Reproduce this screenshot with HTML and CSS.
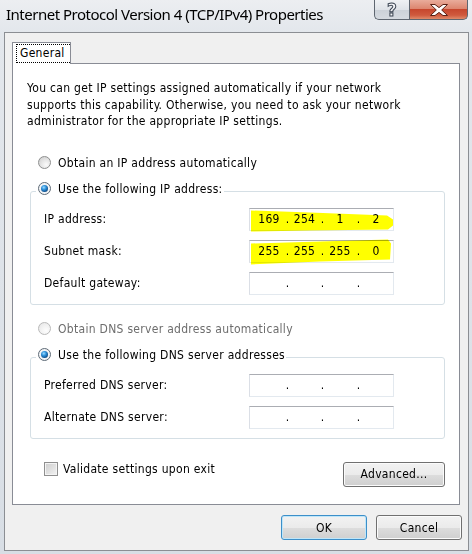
FILE: index.html
```html
<!DOCTYPE html>
<html>
<head>
<meta charset="utf-8">
<title>Internet Protocol Version 4 (TCP/IPv4) Properties</title>
<link rel="stylesheet" href="styles.css">
</head>
<body>
<div class="window">
  <div class="titlebar">
    <div class="title">Internet Protocol Version 4 (TCP/IPv4) Properties</div>
    <div class="caption">
      <div class="cap-btn help"><span class="qmark">?</span></div>
      <div class="cap-btn close">
        <svg width="18" height="12" viewBox="0 0 18 12"><polygon points="0.5,0.5 5,0.5 9,3.6 13,0.5 17.5,0.5 11.7,6 17.5,11.5 13,11.5 9,8.4 5,11.5 0.5,11.5 6.3,6" fill="#fff" stroke="#5a2216" stroke-width="1" stroke-linejoin="round"/></svg>
      </div>
    </div>
  </div>
  <div class="client">
    <div class="tabs"><div class="tab"><span class="focus">General</span></div></div>
    <div class="panel">
      <p class="intro">You can get IP settings assigned automatically if your network<br>supports this capability. Otherwise, you need to ask your network<br>administrator for the appropriate IP settings.</p>

      <div class="radio-row first"><span class="radio"></span><span>Obtain an IP address automatically</span></div>
      <div class="group ip-group">
        <div class="legend"><span class="radio checked"></span><span>Use the following IP address:</span></div>
        <div class="field-row">
          <span class="label">IP address:</span>
          <div class="ipbox hl hl1"><span class="oct">169</span><span class="dot">.</span><span class="oct">254</span><span class="dot">.</span><span class="oct">1</span><span class="dot">.</span><span class="oct">2</span></div>
        </div>
        <div class="field-row">
          <span class="label">Subnet mask:</span>
          <div class="ipbox hl hl2"><span class="oct">255</span><span class="dot">.</span><span class="oct">255</span><span class="dot">.</span><span class="oct">255</span><span class="dot">.</span><span class="oct">0</span></div>
        </div>
        <div class="field-row">
          <span class="label">Default gateway:</span>
          <div class="ipbox"><span class="oct"></span><span class="dot">.</span><span class="oct"></span><span class="dot">.</span><span class="oct"></span><span class="dot">.</span><span class="oct"></span></div>
        </div>
      </div>

      <div class="radio-row dns-first disabled"><span class="radio"></span><span>Obtain DNS server address automatically</span></div>
      <div class="group dns-group">
        <div class="legend"><span class="radio checked"></span><span>Use the following DNS server addresses</span></div>
        <div class="field-row">
          <span class="label">Preferred DNS server:</span>
          <div class="ipbox"><span class="oct"></span><span class="dot">.</span><span class="oct"></span><span class="dot">.</span><span class="oct"></span><span class="dot">.</span><span class="oct"></span></div>
        </div>
        <div class="field-row">
          <span class="label">Alternate DNS server:</span>
          <div class="ipbox"><span class="oct"></span><span class="dot">.</span><span class="oct"></span><span class="dot">.</span><span class="oct"></span><span class="dot">.</span><span class="oct"></span></div>
        </div>
      </div>

      <div class="bottom-row">
        <div class="check"><span class="checkbox"></span><span>Validate settings upon exit</span></div>
        <div class="btn advanced">Advanced...</div>
      </div>
    </div>
    <div class="dialog-buttons">
      <div class="btn ok">OK</div>
      <div class="btn cancel">Cancel</div>
    </div>
  </div>
</div>
</body>
</html>
```

FILE: styles.css
```css
* { box-sizing: border-box; }
html, body { margin: 0; padding: 0; }
body {
  width: 472px;
  height: 554px;
  overflow: hidden;
  font-family: "DejaVu Sans Condensed", "DejaVu Sans", sans-serif;
  font-size: 12px;
  letter-spacing: 0.3px;
  color: #000;
  background: #dfe4ea;
}
.window {
  height: 554px;
  display: flex;
  flex-direction: column;
  background: linear-gradient(#eceef1 0px, #e3e7ec 32px, #d8dee5 554px);
}
.titlebar {
  height: 32px;
  flex-shrink: 0;
  display: flex;
  align-items: flex-start;
}
.title {
  font-family: "Noto Sans", sans-serif;
  font-size: 15px;
  letter-spacing: -0.5px;
  line-height: 20px;
  padding: 4px 0 0 6px;
  white-space: nowrap;
}
.caption {
  margin-left: auto;
  margin-right: 4px;
  display: flex;
}
.cap-btn {
  height: 20px;
  display: flex;
  align-items: center;
  justify-content: center;
  border: 1px solid #5e6670;
  border-top: none;
}
.help {
  width: 35px;
  border-right: none;
  border-radius: 0 0 0 5px;
  background: linear-gradient(#eff1f4, #dfe3e8 50%, #cbd1d8 51%, #d5dae0);
}
.qmark {
  font-family: "DejaVu Sans", sans-serif;
  font-weight: bold;
  font-size: 17px;
  line-height: 18px;
  letter-spacing: 0;
  color: #f4f5f7;
  -webkit-text-stroke: 1px #3a4452;
}
.close {
  width: 59px;
  border-radius: 0 0 5px 0;
  background: linear-gradient(#e9ac9b, #dd8670 45%, #c7472e 50%, #d05a3e 80%, #e08b6a);
}
.close svg { display: block; }

.client {
  flex: 1;
  margin: 0 3px 3px 4px;
  border: 1px solid #8b8e93;
  background: #f0f0f0;
  padding: 9px 6px 0 7px;
  display: flex;
  flex-direction: column;
}
.tabs { display: flex; height: 21px; position: relative; z-index: 1; }
.tab {
  width: 59px;
  height: 22px;
  background: #fff;
  border: 1px solid #898c95;
  border-bottom: none;
  padding: 1px 0 0 3px;
}
.focus {
  display: block;
  height: 19px;
  border: 1px dotted #000;
  border-right: none;
  padding-left: 3px;
  line-height: 17px;
}
.panel {
  height: 442px;
  margin-right: 2px;
  border: 1px solid #898c95;
  background: #fff;
  padding: 16px 14px 0 17px;
}
.intro {
  margin: 0 0 0 -3px;
  line-height: 16.5px;
  white-space: nowrap;
}
.radio-row, .legend, .check {
  display: flex;
  align-items: center;
  height: 20px;
  white-space: nowrap;
}
.radio-row { padding-left: 8px; }
.radio-row.first { margin-top: 23px; }
.radio-row.dns-first { margin-top: 14px; }
.disabled { color: #6d6d6d; }
.radio {
  width: 13px;
  height: 13px;
  flex-shrink: 0;
  border-radius: 50%;
  border: 1px solid #8e8f8f;
  background: radial-gradient(circle at 65% 70%, #fbfbfb 0, #e6e6e6 45%, #c9c9c9 100%);
  margin-right: 7px;
  position: relative;
}
.disabled .radio {
  border-color: #b9b9b9;
  background: radial-gradient(circle at 65% 70%, #fdfdfd 0, #efefef 60%, #e2e2e2 100%);
}
.radio.checked { border-color: #5f6b77; background: #f2f4f6; }
.radio.checked::after {
  content: "";
  position: absolute;
  left: 2px;
  top: 2px;
  width: 7px;
  height: 7px;
  border-radius: 50%;
  background: radial-gradient(circle at 40% 35%, #9fdcff 0, #2f93dc 35%, #0d4a86 75%, #08305a 100%);
}
.group {
  border: 1px solid #d5dfe5;
  border-radius: 3px;
  padding: 0 50px 9px 13px;
}
.ip-group { margin-top: 18px; }
.dns-group { margin-top: 18px; }
.legend {
  width: fit-content;
  margin: -13px 0 0 -8px;
  padding: 0 1px 0 2px;
  background: #fff;
}
.field-row {
  display: flex;
  align-items: center;
  height: 23px;
  margin-top: 9px;
}
.label { flex: 1; white-space: nowrap; }
.ipbox {
  position: relative;
  width: 145px;
  height: 23px;
  border: 1px solid #e3e9ef;
  border-top-color: #abadb3;
  border-left-color: #dbdfe6;
  display: grid;
  grid-template-columns: 30px 6px 29px 6px 30px 6px 30px;
  padding-left: 4px;
  align-items: center;
  line-height: 21px;
}
.oct { text-align: center; }
.dot { text-align: center; padding-left: 1px; }
.hl::after {
  content: "";
  position: absolute;
  left: 0;
  top: 0;
  width: 146px;
  height: 28px;
  background: #ffff00;
  mix-blend-mode: multiply;
  pointer-events: none;
}
.hl1::after {
  clip-path: polygon(1px 2px, 60px 4px, 137px 7px, 143px 11px, 143px 17px, 138px 21px, 60px 22px, 1px 23px);
}
.hl2::after {
  top: -3px;
  clip-path: polygon(1px 6px, 70px 4px, 138px 2px, 141px 6px, 140px 22px, 70px 24px, 1px 27px);
}
.bottom-row {
  display: flex;
  align-items: flex-start;
  margin-top: 23px;
}
.check { padding-left: 14px; height: 15px; }
.checkbox {
  width: 14px;
  height: 14px;
  border: 1px solid #8f8f8f;
  background: linear-gradient(135deg, #cdcdcd, #f3f3f3);
  box-shadow: inset 0 0 0 1px #f4f4f4;
  margin-right: 5px;
  flex-shrink: 0;
}
.btn {
  height: 25px;
  border: 1px solid #707070;
  border-radius: 3px;
  background: linear-gradient(#f2f2f2 0%, #ebebeb 50%, #dddddd 51%, #cfcfcf 100%);
  box-shadow: inset 0 0 0 1px #fbfbfb;
  display: flex;
  align-items: center;
  justify-content: center;
  white-space: nowrap;
}
.advanced { margin-left: auto; width: 102px; }
.dialog-buttons {
  display: flex;
  justify-content: flex-end;
  gap: 9px;
  margin-top: 10px;
}
.dialog-buttons .btn { width: 86px; }
.btn.ok {
  border-color: #3c8fc9;
  box-shadow: inset 0 0 0 1px #bfe6f9;
}
```
